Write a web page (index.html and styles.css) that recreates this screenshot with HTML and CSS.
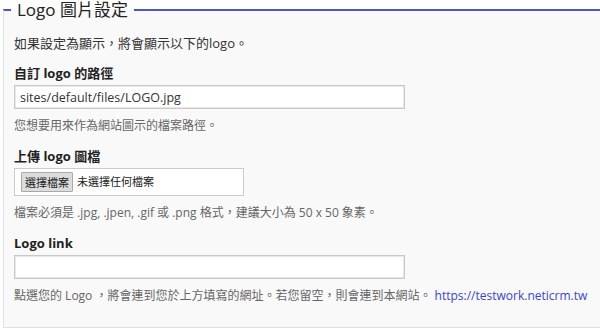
FILE: index.html
```html
<!DOCTYPE html>
<html lang="zh-Hant">
<head>
<meta charset="utf-8">
<title>Logo 圖片設定</title>
<link rel="stylesheet" href="styles.css">
</head>
<body>
<fieldset class="panel">
  <legend class="panel-title">Logo 圖片設定</legend>
  <p class="intro">如果設定為顯示，將會顯示以下的logo。</p>

  <div class="form-item">
    <label class="form-label" for="logo-path">自訂 logo 的路徑</label>
    <input class="text-input" id="logo-path" type="text" value="sites/default/files/LOGO.jpg">
    <div class="description">您想要用來作為網站圖示的檔案路徑。</div>
  </div>

  <div class="form-item">
    <label class="form-label">上傳 logo 圖檔</label>
    <div class="file-field">
      <button class="file-button" type="button">選擇檔案</button>
      <span class="file-name">未選擇任何檔案</span>
    </div>
    <div class="description">檔案必須是 .jpg, .jpen, .gif 或 .png 格式，建議大小為 50 x 50 象素。</div>
  </div>

  <div class="form-item">
    <label class="form-label" for="logo-link">Logo link</label>
    <input class="text-input" id="logo-link" type="text" value="">
    <div class="description">點選您的 Logo ，將會連到您於上方填寫的網址。若您留空，則會連到本網站。 <a class="link" href="#">https://testwork.neticrm.tw</a></div>
  </div>
</fieldset>
</body>
</html>
```

FILE: styles.css
```css
html, body {
  margin: 0;
  padding: 0;
  background: #ffffff;
  overflow: hidden;
}

body {
  font-family: "Open Sans", "Noto Sans CJK TC", sans-serif;
  color: #333333;
  width: 600px;
  height: 333px;
}

.panel {
  box-sizing: border-box;
  width: 620px;
  margin: 0 0 0 3px;
  padding: 0 10px 23px 10px;
  border: 1px solid #e2e2e2;
  border-top: 2px solid #4a58c2;
  background: #f9f9f9;
  min-width: 0;
}

.panel-title {
  margin-left: -3px;
  padding: 0 6px;
  font-size: 17px;
  line-height: 19px;
  color: #222222;
}

.intro {
  margin: 15px 0 12px 0;
  font-size: 13px;
  line-height: 18px;
}

.form-item {
  margin-bottom: 13px;
}

.form-item:last-child {
  margin-bottom: 0;
}

.form-label {
  display: block;
  font-weight: bold;
  font-size: 13px;
  line-height: 18px;
  margin-bottom: 3px;
  color: #222222;
}

.text-input {
  display: block;
  box-sizing: border-box;
  width: 391px;
  height: 24px;
  margin: 0;
  padding: 0 5px;
  border: 1px solid #c8c8c8;
  box-shadow: inset 0 0 0 1px #e8e8e8;
  background: #ffffff;
  font-family: "Open Sans", "Noto Sans CJK TC", sans-serif;
  font-size: 12.5px;
  color: #333333;
  outline: none;
}

.file-field {
  box-sizing: border-box;
  width: 230px;
  height: 28px;
  display: flex;
  align-items: center;
  gap: 4px;
  padding: 0 6px;
  border: 1px solid #cccccc;
  background: #ffffff;
}

.file-button {
  box-sizing: border-box;
  height: 20px;
  width: 52px;
  margin: 0;
  padding: 0;
  border: 1px solid #a9a9a9;
  border-radius: 1px;
  background: #dcdcdc;
  font-family: "Noto Sans CJK TC", sans-serif;
  font-size: 11px;
  line-height: 18px;
  color: #222222;
}

.file-name {
  font-size: 11px;
  line-height: 18px;
  color: #222222;
}

.description {
  margin-top: 8px;
  font-size: 12px;
  line-height: 17px;
  color: #666666;
  white-space: nowrap;
}

.link {
  color: #3745d6;
  text-decoration: none;
  font-size: 12px;
}
```
